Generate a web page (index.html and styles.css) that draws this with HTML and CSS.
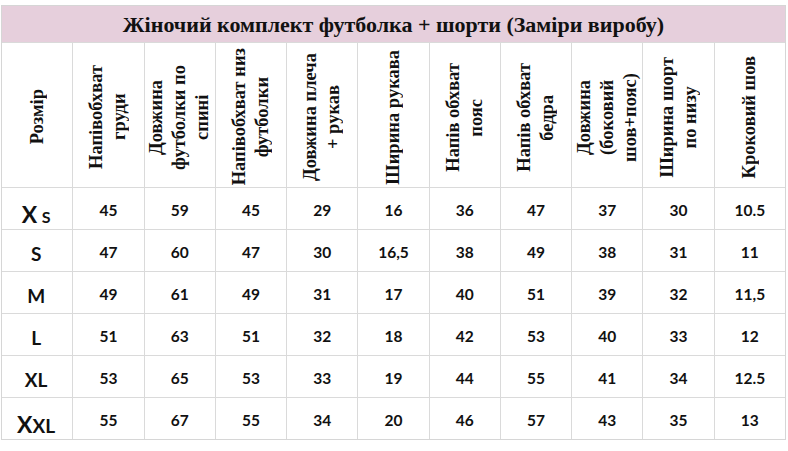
FILE: index.html
```html
<!DOCTYPE html>
<html lang="uk">
<head>
<meta charset="utf-8">
<title>Жіночий комплект футболка + шорти</title>
<link rel="stylesheet" href="styles.css">
</head>
<body>
<div class="sheet">
  <div class="title">Жіночий комплект футболка + шорти (Заміри виробу)</div>

  <div class="head"><span class="rot">Розмір</span></div>
  <div class="head"><span class="rot">Напівобхват<br>груди</span></div>
  <div class="head"><span class="rot">Довжина<br>футболки по<br>спині</span></div>
  <div class="head"><span class="rot">Напівобхват низ<br>футболки</span></div>
  <div class="head"><span class="rot">Довжина плеча<br>+ рукав</span></div>
  <div class="head"><span class="rot">Ширина рукава</span></div>
  <div class="head"><span class="rot">Напів обхват<br>пояс</span></div>
  <div class="head"><span class="rot">Напів обхват<br>бедра</span></div>
  <div class="head"><span class="rot">Довжина<br>(боковий<br>шов+пояс)</span></div>
  <div class="head"><span class="rot">Ширина шорт<br>по низу</span></div>
  <div class="head"><span class="rot">Кроковий шов</span></div>

  <div class="cell size"><span class="big">X</span>&nbsp;<span class="small">S</span></div>
  <div class="cell">45</div><div class="cell">59</div><div class="cell">45</div><div class="cell">29</div><div class="cell">16</div><div class="cell">36</div><div class="cell">47</div><div class="cell">37</div><div class="cell">30</div><div class="cell">10.5</div>

  <div class="cell size">S</div>
  <div class="cell">47</div><div class="cell">60</div><div class="cell">47</div><div class="cell">30</div><div class="cell">16,5</div><div class="cell">38</div><div class="cell">49</div><div class="cell">38</div><div class="cell">31</div><div class="cell">11</div>

  <div class="cell size">M</div>
  <div class="cell">49</div><div class="cell">61</div><div class="cell">49</div><div class="cell">31</div><div class="cell">17</div><div class="cell">40</div><div class="cell">51</div><div class="cell">39</div><div class="cell">32</div><div class="cell">11,5</div>

  <div class="cell size">L</div>
  <div class="cell">51</div><div class="cell">63</div><div class="cell">51</div><div class="cell">32</div><div class="cell">18</div><div class="cell">42</div><div class="cell">53</div><div class="cell">40</div><div class="cell">33</div><div class="cell">12</div>

  <div class="cell size">XL</div>
  <div class="cell">53</div><div class="cell">65</div><div class="cell">53</div><div class="cell">33</div><div class="cell">19</div><div class="cell">44</div><div class="cell">55</div><div class="cell">41</div><div class="cell">34</div><div class="cell">12.5</div>

  <div class="cell size"><span class="big">X</span>XL</div>
  <div class="cell">55</div><div class="cell">67</div><div class="cell">55</div><div class="cell">34</div><div class="cell">20</div><div class="cell">46</div><div class="cell">57</div><div class="cell">43</div><div class="cell">35</div><div class="cell">13</div>
</div>
</body>
</html>
```

FILE: styles.css
```css
html, body {
  margin: 0;
  padding: 0;
  background: #ffffff;
}

body {
  padding: 5px 0 0 1px;
}

.sheet {
  width: 785px;
  box-sizing: border-box;
  display: grid;
  grid-template-columns: repeat(11, 1fr);
  grid-template-rows: 36px 144px repeat(6, 41px);
  gap: 1px;
  border: 1px solid #d6d6d6;
  background: #dadada;
  color: #111111;
}

.title {
  grid-column: 1 / -1;
  background: #e6cfdc;
  display: flex;
  align-items: center;
  justify-content: center;
  font-family: "Liberation Serif", "Times New Roman", serif;
  font-weight: 700;
  font-size: 22px;
  padding-top: 1px;
}

.head {
  background: #ffffff;
  display: flex;
  align-items: center;
  justify-content: center;
  padding-top: 4px;
}

.rot {
  writing-mode: vertical-rl;
  transform: rotate(180deg);
  text-align: center;
  font-family: "Liberation Serif", "Times New Roman", serif;
  font-weight: 700;
  font-size: 18.5px;
  line-height: 23px;
}

.cell {
  background: #ffffff;
  display: flex;
  align-items: center;
  justify-content: center;
  font-family: Lato, "Open Sans", sans-serif;
  font-weight: 700;
  font-size: 15.5px;
  padding-top: 2px;
}

.size {
  font-size: 19px;
  align-items: baseline;
  padding-top: 12px;
  padding-right: 2px;
  box-sizing: border-box;
}

.size .big {
  font-size: 23px;
}

.size .small {
  font-size: 16px;
}
```
